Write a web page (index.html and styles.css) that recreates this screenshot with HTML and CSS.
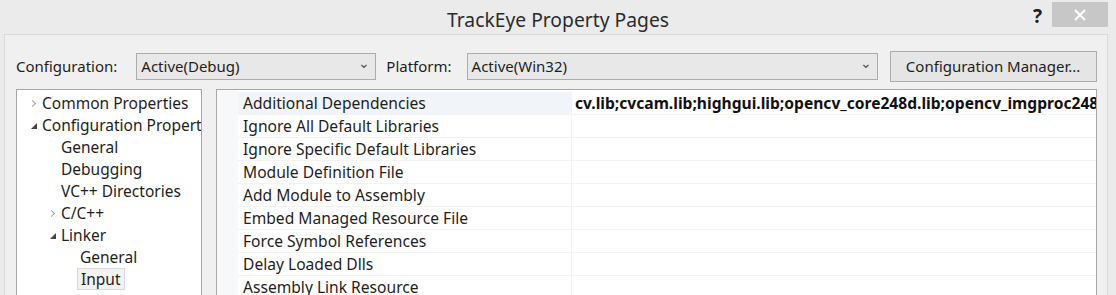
FILE: index.html
```html
<!DOCTYPE html>
<html lang="en">
	<head>
		<meta charset="utf-8">
		<meta name="viewport" content="width=device-width, initial-scale=1.0">
		<title>TrackEye Property Pages</title>
		<link rel="stylesheet" href="styles.css">
	</head>

	<body>
		<header class="titlebar">
			<span></span>
			<h1>TrackEye Property Pages</h1>
			<div class="caption-buttons">
				<span class="help">?</span>
				<span class="close">
					<svg width="12" height="12" viewBox="0 0 12 12"><path d="M1 1L11 11M11 1L1 11" stroke="#fff" stroke-width="2"/></svg>
				</span>
			</div>
		</header>

		<main class="dialog">
			<div class="toolbar">
				<label class="config-label">Configuration:</label>
				<div class="select config">Active(Debug)<span class="arrow">&#8964;</span></div>
				<label>Platform:</label>
				<div class="select platform">Active(Win32)<span class="arrow">&#8964;</span></div>
				<button>Configuration Manager...</button>
			</div>

			<div class="panes">
				<ul class="tree">
					<li class="lvl1"><span class="exp closed"></span>Common Properties</li>
					<li class="lvl1"><span class="exp open"></span>Configuration Properties</li>
					<li class="lvl2"><span class="exp"></span>General</li>
					<li class="lvl2"><span class="exp"></span>Debugging</li>
					<li class="lvl2"><span class="exp"></span>VC++ Directories</li>
					<li class="lvl2"><span class="exp closed"></span>C/C++</li>
					<li class="lvl2"><span class="exp open"></span>Linker</li>
					<li class="lvl3"><span class="exp"></span>General</li>
					<li class="lvl3"><span class="exp"></span><span class="selected">Input</span></li>
					<li class="lvl3"><span class="exp"></span>Manifest File</li>
				</ul>

				<div class="grid">
					<div class="row current"><span class="name">Additional Dependencies</span><span class="value">cv.lib;cvcam.lib;highgui.lib;opencv_core248d.lib;opencv_imgproc248d.lib;opencv_highgui248d.lib</span></div>
					<div class="row"><span class="name">Ignore All Default Libraries</span><span class="value"></span></div>
					<div class="row"><span class="name">Ignore Specific Default Libraries</span><span class="value"></span></div>
					<div class="row"><span class="name">Module Definition File</span><span class="value"></span></div>
					<div class="row"><span class="name">Add Module to Assembly</span><span class="value"></span></div>
					<div class="row"><span class="name">Embed Managed Resource File</span><span class="value"></span></div>
					<div class="row"><span class="name">Force Symbol References</span><span class="value"></span></div>
					<div class="row"><span class="name">Delay Loaded Dlls</span><span class="value"></span></div>
					<div class="row"><span class="name">Assembly Link Resource</span><span class="value"></span></div>
				</div>
			</div>
		</main>
	</body>
</html>
```

FILE: styles.css
```css
body{
	margin: 0;
	height: 295px;
	overflow: hidden;
	background-color: #ebebeb;
	font-family: "Noto Sans", "Open Sans", sans-serif;
	font-size: 15px;
	color: #1e1e1e;
}
.titlebar{
	display: grid;
	grid-template-columns: 1fr auto 1fr;
	height: 34px;
	align-items: start;
}
.titlebar h1{
	margin: 0;
	padding-top: 6px;
	font-size: 19.3px;
	font-weight: normal;
	color: #2b2b2b;
}
.caption-buttons{
	display: flex;
	justify-content: flex-end;
	align-items: start;
	padding-top: 2px;
	padding-right: 8px;
}
.help{
	font-weight: bold;
	font-size: 19px;
	line-height: 20px;
	padding-top: 4px;
	margin-right: 10px;
}
.close{
	width: 56px;
	height: 25px;
	background-color: #c7c7c7;
	display: grid;
	place-items: center;
}
.dialog{
	margin-left: 4px;
	margin-right: 8px;
	height: 261px;
	background-color: #f0f0f0;
	border-top: 1px solid #d9d9d9;
	border-left: 1px solid #d9d9d9;
	border-right: 1px solid #d9d9d9;
	padding: 16px 10px 0 11px;
	box-sizing: border-box;
}
.toolbar{
	display: flex;
	align-items: center;
	height: 30px;
}
.toolbar label{
	margin-right: 15px;
}
.toolbar .config-label{
	margin-right: 19px;
}
.select{
	height: 27px;
	box-sizing: border-box;
	border: 1px solid #acacac;
	background-color: #e8e8e8;
	padding-left: 4px;
	display: flex;
	align-items: center;
	justify-content: space-between;
	margin-right: 10px;
}
.select.config{
	width: 240px;
}
.select.platform{
	width: 411px;
}
.arrow{
	font-size: 14px;
	color: #555;
	padding-right: 5px;
	margin-top: -8px;
}
button{
	margin-left: 2px;
	width: 207px;
	height: 31px;
	border: 1px solid #acacac;
	background-color: #e5e5e5;
	font-family: inherit;
	font-size: 15px;
	color: #1e1e1e;
	padding: 0;
}
.panes{
	display: flex;
	gap: 14px;
	margin-top: 8px;
}
.tree{
	list-style: none;
	margin: 0;
	padding: 2px 0 0;
	width: 186px;
	height: 220px;
	box-sizing: border-box;
	background-color: #fff;
	border: 1px solid #a8a8a8;
	overflow: hidden;
	white-space: nowrap;
	font-size: 15.5px;
}
.tree li{
	height: 22px;
	line-height: 22px;
	display: flex;
	align-items: center;
}
.lvl1{ padding-left: 14px; }
.lvl2{ padding-left: 33px; }
.lvl3{ padding-left: 52px; }
.exp{
	flex-shrink: 0;
	width: 6px;
	margin-right: 5px;
	display: inline-block;
	height: 10px;
	position: relative;
}
.exp.closed::before{
	content: "";
	position: absolute;
	left: -1px;
	top: 3px;
	width: 4px;
	height: 4px;
	border-right: 1px solid #a0a0a0;
	border-bottom: 1px solid #a0a0a0;
	transform: rotate(-45deg);
}
.exp.open::before{
	content: "";
	position: absolute;
	left: 0;
	top: 3px;
	border-left: 6px solid transparent;
	border-bottom: 6px solid #444;
}
.selected{
	margin-left: -3px;
	padding: 0 3px;
	line-height: 20px;
	background-color: #f2f2f2;
	border: 1px solid #dadada;
}
.grid{
	flex: 1;
	height: 220px;
	box-sizing: border-box;
	background-color: #fff;
	border: 1px solid #a8a8a8;
	overflow: hidden;
	padding-left: 21px;
	padding-top: 2px;
	background-image: linear-gradient(#f7f8fa, #f7f8fa);
	background-size: 21px 100%;
	background-repeat: no-repeat;
	font-size: 15.6px;
}
.row{
	display: grid;
	grid-template-columns: 334px 1fr;
	height: 23px;
	line-height: 22px;
	border-bottom: 1px solid #f3f3f3;
	box-sizing: border-box;
	white-space: nowrap;
}
.row.current .name{
	background-color: #f1f4f8;
}
.name{
	padding-left: 5px;
	border-right: 1px solid #f3f3f3;
}
.value{
	padding-left: 3px;
	overflow: hidden;
	font-weight: bold;
	color: #111;
}
```
